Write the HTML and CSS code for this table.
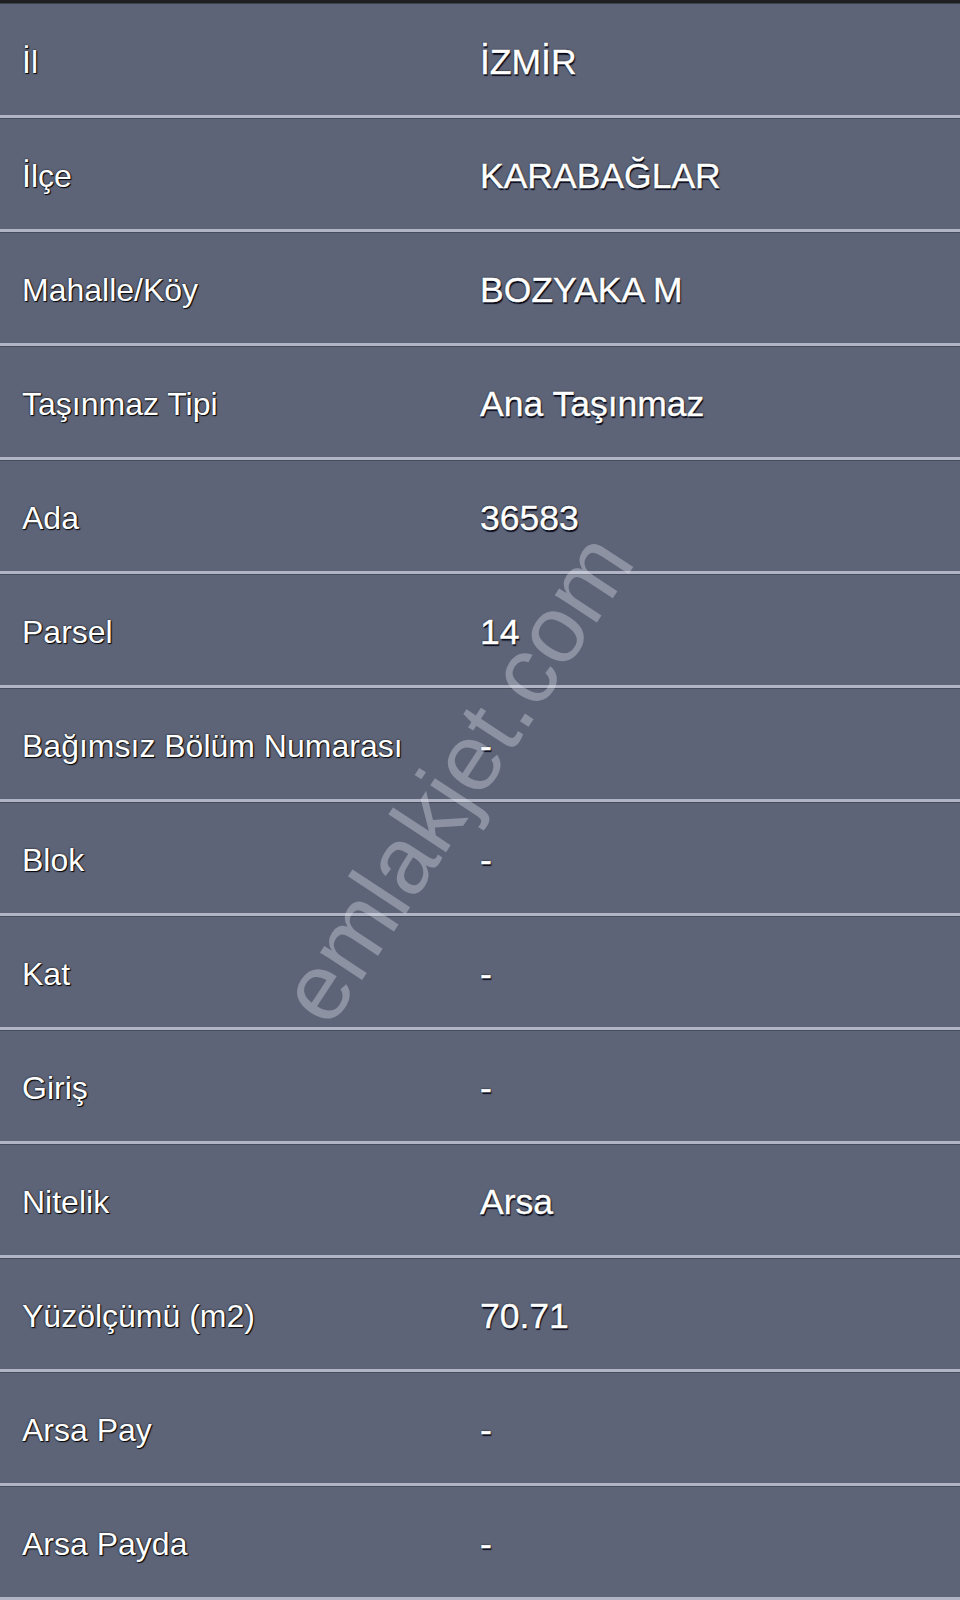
FILE: index.html
```html
<!DOCTYPE html>
<html lang="tr">
<head>
<meta charset="utf-8">
<title>Taşınmaz Bilgileri</title>
<link rel="stylesheet" href="styles.css">
</head>
<body>
<div class="page">
  <div class="topbar"></div>
  <div class="table">
    <div class="row"><div class="label">İl</div><div class="value">İZMİR</div></div>
    <div class="row"><div class="label">İlçe</div><div class="value">KARABAĞLAR</div></div>
    <div class="row"><div class="label">Mahalle/Köy</div><div class="value">BOZYAKA M</div></div>
    <div class="row"><div class="label">Taşınmaz Tipi</div><div class="value">Ana Taşınmaz</div></div>
    <div class="row"><div class="label">Ada</div><div class="value">36583</div></div>
    <div class="row"><div class="label">Parsel</div><div class="value">14</div></div>
    <div class="row"><div class="label">Bağımsız Bölüm Numarası</div><div class="value">-</div></div>
    <div class="row"><div class="label">Blok</div><div class="value">-</div></div>
    <div class="row"><div class="label">Kat</div><div class="value">-</div></div>
    <div class="row"><div class="label">Giriş</div><div class="value">-</div></div>
    <div class="row"><div class="label">Nitelik</div><div class="value">Arsa</div></div>
    <div class="row"><div class="label">Yüzölçümü (m2)</div><div class="value">70.71</div></div>
    <div class="row"><div class="label">Arsa Pay</div><div class="value">-</div></div>
    <div class="row"><div class="label">Arsa Payda</div><div class="value">-</div></div>
  </div>
  <div class="watermark">emlakjet.com</div>
</div>
</body>
</html>
```
FILE: styles.css
```css
html, body {
  margin: 0;
  padding: 0;
  background: #5d6478;
}
.page {
  position: relative;
  width: 960px;
  height: 1600px;
  overflow: hidden;
  background: #5d6478;
  font-family: "Liberation Sans", Arial, sans-serif;
  color: #fff;
}
.topbar {
  height: 3px;
  background: #1f1f22;
  border-bottom: 1px solid #3b404d;
}
.table {
  display: flex;
  flex-direction: column;
}
.row {
  display: flex;
  align-items: center;
  height: 110px;
  border-bottom: 3px solid #b0b4c5;
  box-shadow: 0 1px 0 #474c5c;
  padding-top: 1px;
  box-sizing: content-box;
}
.label {
  width: 458px;
  padding-left: 22px;
  padding-top: 4px;
  font-size: 32px;
  text-shadow: 0 0 2px #111, 1px 1px 1px #000;
  white-space: nowrap;
}
.value {
  padding-top: 4px;
  font-size: 35.5px;
  -webkit-text-stroke: 0.4px #fff;
  text-shadow: 0 0 2px #000, 1px 2px 1px #0a0c1e;
  white-space: nowrap;
}
.watermark {
  position: absolute;
  left: 456px;
  top: 778px;
  transform: translate(-50%, -50%) rotate(-56.7deg);
  font-size: 95px;
  color: rgba(232, 235, 242, 0.34);
  white-space: nowrap;
  pointer-events: none;
}
```
